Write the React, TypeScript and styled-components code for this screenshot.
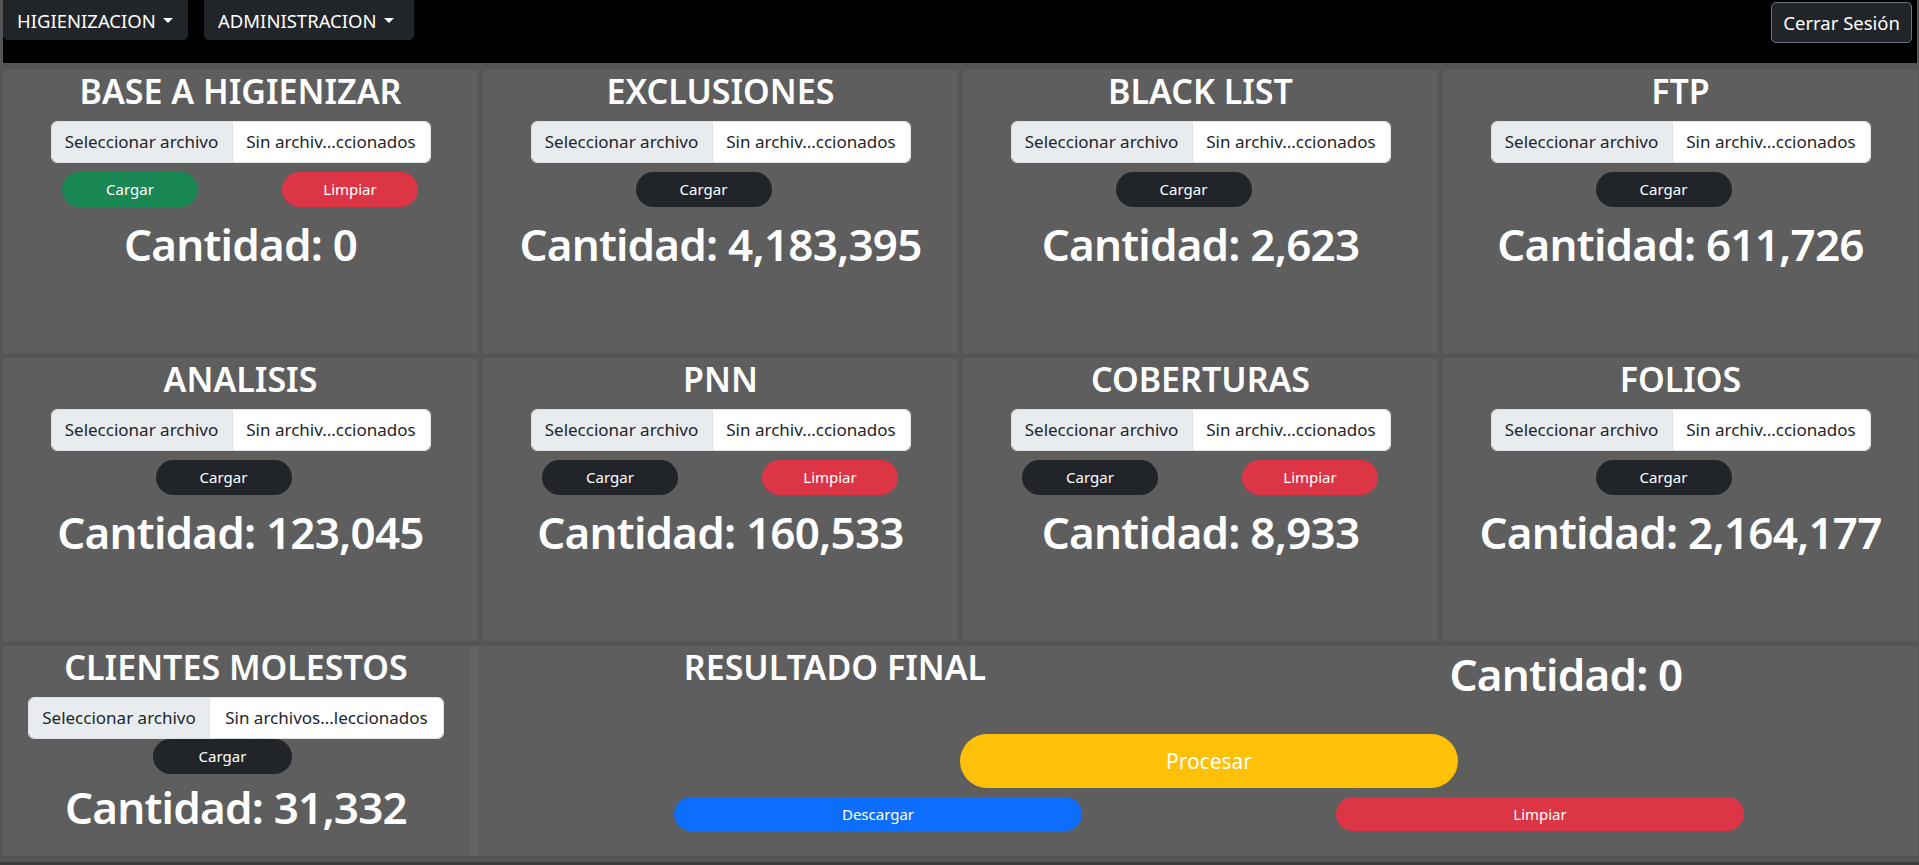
import React from "react";
import styled, { createGlobalStyle } from "styled-components";

const GlobalStyle = createGlobalStyle`
  html, body { margin: 0; padding: 0; }
  body {
    background: #555555;
    font-family: "Noto Sans", "Open Sans", Arial, sans-serif;
    overflow: hidden;
  }
  * { box-sizing: border-box; }
`;

const Page = styled.div`
  width: 1919px;
  height: 865px;
  padding: 0 1px 0 3px;
  display: flex;
  flex-direction: column;
  border-bottom: 3px solid #3c3c3c;
`;

const NavBar = styled.nav`
  height: 63px;
  flex: none;
  background: #000;
  display: flex;
  align-items: flex-start;
  margin-right: 1px;
`;

const NavMenu = styled.div`
  display: flex;
  gap: 16px;
`;

const NavToggle = styled.button<{ $w: number }>`
  width: ${(p) => p.$w}px;
  height: 40px;
  padding: 0 0 0 14px;
  background: #212529;
  color: #fff;
  border: none;
  border-radius: 0 0 5px 5px;
  font-family: inherit;
  font-size: 18.5px;
  display: flex;
  align-items: center;
  &::after {
    content: "";
    margin-left: 7px;
    border-top: 5px solid #fff;
    border-left: 5px solid transparent;
    border-right: 5px solid transparent;
  }
`;

const LogoutButton = styled.button`
  margin: 2px 5px 0 auto;
  height: 41px;
  padding: 0 11px;
  background: #212529;
  color: #fff;
  border: 1px solid #6c757d;
  border-radius: 5px;
  font-family: inherit;
  font-size: 18.5px;
`;

const Grid = styled.main`
  margin-top: 7px;
  display: grid;
  grid-template-columns: repeat(4, 1fr);
  grid-auto-rows: 283px;
  gap: 5px;
`;

const BottomRow = styled.section`
  margin-top: 5px;
  height: 210px;
  display: grid;
  grid-template-columns: 466px 9px 1fr;
`;

const Card = styled.div`
  background: #5e5e5e;
  color: #fff;
  display: flex;
  flex-direction: column;
  align-items: center;
  min-width: 0;
`;

const Divider = styled.div`
  background: #646464;
`;

const Title = styled.h2`
  margin: -2px 0 0;
  font-size: 34px;
  font-weight: 600;
  line-height: 1.37;
  white-space: nowrap;
`;

const FileInput = styled.label<{ $wide?: boolean }>`
  margin-top: 6px;
  width: ${(p) => (p.$wide ? 416 : 380)}px;
  height: 42px;
  flex: none;
  display: flex;
  border: 1px solid #dee2e6;
  border-radius: 6px;
  overflow: hidden;
  font-size: 17px;
  line-height: 1.4;
  color: #212529;
`;

const FileButton = styled.span`
  flex: none;
  width: 181px;
  background: #e9ecef;
  border-right: 1px solid #dee2e6;
  display: flex;
  align-items: center;
  justify-content: center;
  white-space: nowrap;
`;

const FileName = styled.span`
  flex: 1;
  background: #fff;
  display: flex;
  align-items: center;
  justify-content: center;
  white-space: nowrap;
`;

const ButtonRow = styled.div<{ $single?: boolean; $gap?: number; $shift?: number }>`
  width: 100%;
  margin-top: ${(p) => p.$gap ?? 9}px;
  display: flex;
  justify-content: ${(p) => (p.$single ? "center" : "space-around")};
  padding: ${(p) => (p.$single ? `0 ${p.$shift ?? 34}px 0 0` : "0 18px 0 17px")};
`;

const palette = {
  success: "#198754",
  danger: "#dc3545",
  dark: "#212529",
  primary: "#0d6efd",
  warning: "#ffc107",
};

type Variant = keyof typeof palette;

const Pill = styled.button<{ $variant: Variant; $w?: number }>`
  width: ${(p) => p.$w ?? 136}px;
  height: 35px;
  flex: none;
  border: none;
  border-radius: 18px;
  background: ${(p) => palette[p.$variant]};
  color: #fff;
  font-family: inherit;
  font-size: 15px;
  line-height: 1.4;
  padding: 0;
`;

const Count = styled.h1<{ $gap?: number }>`
  margin: ${(p) => p.$gap ?? 7}px 0 0;
  font-size: 44px;
  font-weight: 600;
  letter-spacing: -0.8px;
  line-height: 1.37;
  white-space: nowrap;
`;

const ResultCard = styled(Card)`
  align-items: stretch;
`;

const ResultHeader = styled.div`
  display: grid;
  grid-template-columns: 714px 1fr;
  align-items: start;
`;

const ResultTitle = styled(Title)`
  text-align: center;
`;

const ResultCount = styled(Count)`
  margin: -2px 0 0;
  padding-left: 22px;
  text-align: center;
`;

const ProcessButton = styled.button`
  display: block;
  margin: 30px 0 0 482px;
  width: 498px;
  height: 54px;
  border: none;
  border-radius: 27px;
  background: #ffc107;
  color: #fff;
  font-family: inherit;
  font-size: 21px;
  line-height: 1.4;
`;

const ResultActions = styled.div`
  margin-top: 9px;
  padding-left: 69px;
  display: grid;
  grid-template-columns: 662px 662px;
  justify-items: center;
`;

const WidePill = styled(Pill)`
  height: 34px;
  border-radius: 17px;
`;

type Panel = {
  title: string;
  count: string;
  clear?: boolean;
  green?: boolean;
};

const panels: Panel[] = [
  { title: "BASE A HIGIENIZAR", count: "0", clear: true, green: true },
  { title: "EXCLUSIONES", count: "4,183,395" },
  { title: "BLACK LIST", count: "2,623" },
  { title: "FTP", count: "611,726" },
  { title: "ANALISIS", count: "123,045" },
  { title: "PNN", count: "160,533", clear: true },
  { title: "COBERTURAS", count: "8,933", clear: true },
  { title: "FOLIOS", count: "2,164,177" },
];

export default function App() {
  return (
    <>
      <GlobalStyle />
      <Page>
        <NavBar>
          <NavMenu>
            <NavToggle $w={185}>HIGIENIZACION</NavToggle>
            <NavToggle $w={210}>ADMINISTRACION</NavToggle>
          </NavMenu>
          <LogoutButton>Cerrar Sesión</LogoutButton>
        </NavBar>
        <Grid>
          {panels.map((p) => (
            <Card key={p.title}>
              <Title>{p.title}</Title>
              <FileInput>
                <FileButton>Seleccionar archivo</FileButton>
                <FileName>Sin archiv...ccionados</FileName>
              </FileInput>
              <ButtonRow $single={!p.clear}>
                <Pill $variant={p.green ? "success" : "dark"}>Cargar</Pill>
                {p.clear && <Pill $variant="danger">Limpiar</Pill>}
              </ButtonRow>
              <Count>Cantidad: {p.count}</Count>
            </Card>
          ))}
        </Grid>
        <BottomRow>
          <Card>
            <Title>CLIENTES MOLESTOS</Title>
            <FileInput $wide>
              <FileButton>Seleccionar archivo</FileButton>
              <FileName>Sin archivos...leccionados</FileName>
            </FileInput>
            <ButtonRow $single $gap={0} $shift={27}>
              <Pill $variant="dark" $w={139}>Cargar</Pill>
            </ButtonRow>
            <Count $gap={3}>Cantidad: 31,332</Count>
          </Card>
          <Divider />
          <ResultCard>
            <ResultHeader>
              <ResultTitle>RESULTADO FINAL</ResultTitle>
              <ResultCount>Cantidad: 0</ResultCount>
            </ResultHeader>
            <ProcessButton>Procesar</ProcessButton>
            <ResultActions>
              <WidePill $variant="primary" $w={408}>Descargar</WidePill>
              <WidePill $variant="danger" $w={408}>Limpiar</WidePill>
            </ResultActions>
          </ResultCard>
        </BottomRow>
      </Page>
    </>
  );
}
